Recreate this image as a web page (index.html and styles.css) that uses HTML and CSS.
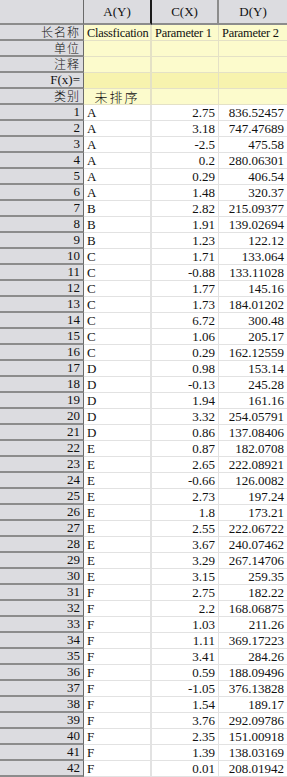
FILE: index.html
```html
<!DOCTYPE html>
<html lang="zh">
<head>
<meta charset="utf-8">
<link rel="stylesheet" href="styles.css">
</head>
<body>
<div class="sheet">
  <div class="row head">
    <div class="c rh"></div>
    <div class="c ca">A(Y)</div>
    <div class="c cc">C(X)</div>
    <div class="c cd">D(Y)</div>
  </div>
  <div class="row meta">
    <div class="c rh cjk">长名称</div>
    <div class="c ca txt lbl">Classfication</div>
    <div class="c cc txt lbl">Parameter 1</div>
    <div class="c cd txt lbl">Parameter 2</div>
  </div>
  <div class="row meta">
    <div class="c rh cjk">单位</div>
    <div class="c ca"></div><div class="c cc"></div><div class="c cd"></div>
  </div>
  <div class="row meta">
    <div class="c rh cjk">注释</div>
    <div class="c ca"></div><div class="c cc"></div><div class="c cd"></div>
  </div>
  <div class="row meta fx">
    <div class="c rh">F(x)=</div>
    <div class="c ca"></div><div class="c cc"></div><div class="c cd"></div>
  </div>
  <div class="row meta">
    <div class="c rh cjk">类别</div>
    <div class="c ca cjk mid">未排序</div><div class="c cc"></div><div class="c cd"></div>
  </div>
  <div class="row"><div class="c rh">1</div><div class="c ca txt">A</div><div class="c cc">2.75</div><div class="c cd">836.52457</div></div>
  <div class="row"><div class="c rh">2</div><div class="c ca txt">A</div><div class="c cc">3.18</div><div class="c cd">747.47689</div></div>
  <div class="row"><div class="c rh">3</div><div class="c ca txt">A</div><div class="c cc">-2.5</div><div class="c cd">475.58</div></div>
  <div class="row"><div class="c rh">4</div><div class="c ca txt">A</div><div class="c cc">0.2</div><div class="c cd">280.06301</div></div>
  <div class="row"><div class="c rh">5</div><div class="c ca txt">A</div><div class="c cc">0.29</div><div class="c cd">406.54</div></div>
  <div class="row"><div class="c rh">6</div><div class="c ca txt">A</div><div class="c cc">1.48</div><div class="c cd">320.37</div></div>
  <div class="row"><div class="c rh">7</div><div class="c ca txt">B</div><div class="c cc">2.82</div><div class="c cd">215.09377</div></div>
  <div class="row"><div class="c rh">8</div><div class="c ca txt">B</div><div class="c cc">1.91</div><div class="c cd">139.02694</div></div>
  <div class="row"><div class="c rh">9</div><div class="c ca txt">B</div><div class="c cc">1.23</div><div class="c cd">122.12</div></div>
  <div class="row"><div class="c rh">10</div><div class="c ca txt">C</div><div class="c cc">1.71</div><div class="c cd">133.064</div></div>
  <div class="row"><div class="c rh">11</div><div class="c ca txt">C</div><div class="c cc">-0.88</div><div class="c cd">133.11028</div></div>
  <div class="row"><div class="c rh">12</div><div class="c ca txt">C</div><div class="c cc">1.77</div><div class="c cd">145.16</div></div>
  <div class="row"><div class="c rh">13</div><div class="c ca txt">C</div><div class="c cc">1.73</div><div class="c cd">184.01202</div></div>
  <div class="row"><div class="c rh">14</div><div class="c ca txt">C</div><div class="c cc">6.72</div><div class="c cd">300.48</div></div>
  <div class="row"><div class="c rh">15</div><div class="c ca txt">C</div><div class="c cc">1.06</div><div class="c cd">205.17</div></div>
  <div class="row"><div class="c rh">16</div><div class="c ca txt">C</div><div class="c cc">0.29</div><div class="c cd">162.12559</div></div>
  <div class="row"><div class="c rh">17</div><div class="c ca txt">D</div><div class="c cc">0.98</div><div class="c cd">153.14</div></div>
  <div class="row"><div class="c rh">18</div><div class="c ca txt">D</div><div class="c cc">-0.13</div><div class="c cd">245.28</div></div>
  <div class="row"><div class="c rh">19</div><div class="c ca txt">D</div><div class="c cc">1.94</div><div class="c cd">161.16</div></div>
  <div class="row"><div class="c rh">20</div><div class="c ca txt">D</div><div class="c cc">3.32</div><div class="c cd">254.05791</div></div>
  <div class="row"><div class="c rh">21</div><div class="c ca txt">D</div><div class="c cc">0.86</div><div class="c cd">137.08406</div></div>
  <div class="row"><div class="c rh">22</div><div class="c ca txt">E</div><div class="c cc">0.87</div><div class="c cd">182.0708</div></div>
  <div class="row"><div class="c rh">23</div><div class="c ca txt">E</div><div class="c cc">2.65</div><div class="c cd">222.08921</div></div>
  <div class="row"><div class="c rh">24</div><div class="c ca txt">E</div><div class="c cc">-0.66</div><div class="c cd">126.0082</div></div>
  <div class="row"><div class="c rh">25</div><div class="c ca txt">E</div><div class="c cc">2.73</div><div class="c cd">197.24</div></div>
  <div class="row"><div class="c rh">26</div><div class="c ca txt">E</div><div class="c cc">1.8</div><div class="c cd">173.21</div></div>
  <div class="row"><div class="c rh">27</div><div class="c ca txt">E</div><div class="c cc">2.55</div><div class="c cd">222.06722</div></div>
  <div class="row"><div class="c rh">28</div><div class="c ca txt">E</div><div class="c cc">3.67</div><div class="c cd">240.07462</div></div>
  <div class="row"><div class="c rh">29</div><div class="c ca txt">E</div><div class="c cc">3.29</div><div class="c cd">267.14706</div></div>
  <div class="row"><div class="c rh">30</div><div class="c ca txt">E</div><div class="c cc">3.15</div><div class="c cd">259.35</div></div>
  <div class="row"><div class="c rh">31</div><div class="c ca txt">F</div><div class="c cc">2.75</div><div class="c cd">182.22</div></div>
  <div class="row"><div class="c rh">32</div><div class="c ca txt">F</div><div class="c cc">2.2</div><div class="c cd">168.06875</div></div>
  <div class="row"><div class="c rh">33</div><div class="c ca txt">F</div><div class="c cc">1.03</div><div class="c cd">211.26</div></div>
  <div class="row"><div class="c rh">34</div><div class="c ca txt">F</div><div class="c cc">1.11</div><div class="c cd">369.17223</div></div>
  <div class="row"><div class="c rh">35</div><div class="c ca txt">F</div><div class="c cc">3.41</div><div class="c cd">284.26</div></div>
  <div class="row"><div class="c rh">36</div><div class="c ca txt">F</div><div class="c cc">0.59</div><div class="c cd">188.09496</div></div>
  <div class="row"><div class="c rh">37</div><div class="c ca txt">F</div><div class="c cc">-1.05</div><div class="c cd">376.13828</div></div>
  <div class="row"><div class="c rh">38</div><div class="c ca txt">F</div><div class="c cc">1.54</div><div class="c cd">189.17</div></div>
  <div class="row"><div class="c rh">39</div><div class="c ca txt">F</div><div class="c cc">3.76</div><div class="c cd">292.09786</div></div>
  <div class="row"><div class="c rh">40</div><div class="c ca txt">F</div><div class="c cc">2.35</div><div class="c cd">151.00918</div></div>
  <div class="row"><div class="c rh">41</div><div class="c ca txt">F</div><div class="c cc">1.39</div><div class="c cd">138.03169</div></div>
  <div class="row"><div class="c rh">42</div><div class="c ca txt">F</div><div class="c cc">0.01</div><div class="c cd">208.01942</div></div>
</div>
</body>
</html>
```

FILE: styles.css
```css
html, body {
  margin: 0;
  padding: 0;
  background: #ffffff;
}
.sheet {
  width: 287px;
  font-family: "Liberation Serif", "Times New Roman", serif;
  font-size: 13px;
  color: #111;
}
.row {
  display: flex;
  height: 16px;
}
.c {
  box-sizing: border-box;
  height: 100%;
  display: flex;
  align-items: center;
  justify-content: flex-end;
  padding: 0 3px;
  white-space: nowrap;
  line-height: 14px;
  border-bottom: 1px solid #e2e2e2;
  border-right: 1px solid #e2e2e2;
}
.rh {
  width: 84px;
  background: #dcdce0;
  border-bottom: 2px solid #8c8c8c;
  border-right: 1px solid #6a6a6a;
}
.ca { width: 68px; border-right-width: 2px; }
.cc { width: 67px; }
.cd { width: 68px; border-right: none; }
.txt { justify-content: flex-start; }
.mid { justify-content: center; }
.cjk {
  font-family: "Noto Sans CJK SC", "Noto Sans", sans-serif;
  font-size: 12px;
  line-height: 12px;
  letter-spacing: 1px;
  font-weight: 300;
}

.head { height: 25px; }
.head .c {
  background: #dcdce0;
  border-bottom: 2px solid #8c8c8c;
  border-right: 2px solid #8c8c8c;
  justify-content: center;
  padding-top: 1px;
}
.head .rh { border-right: 1px solid #6a6a6a; }
.head .ca { border-right: 2px solid #1a1a1a; }
.head .cd { border-right: none; }

.meta .ca, .meta .cc, .meta .cd {
  background: #fcfbcc;
  border-bottom-color: #e4e1c6;
  border-right-color: #e4e1c6;
}
.meta .lbl {
  font-size: 12.4px;
  letter-spacing: -0.25px;
  padding-left: 3px;
  padding-right: 0;
}
.fx .ca, .fx .cc, .fx .cd { background: #f7f3ae; }
.meta .mid { letter-spacing: 2px; font-size: 13px; }
```
